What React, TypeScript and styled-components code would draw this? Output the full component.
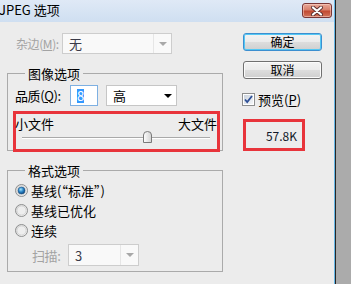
import React from "react";
import styled, { createGlobalStyle } from "styled-components";

const Global = createGlobalStyle`
  html, body { margin: 0; padding: 0; background: #ababab; }
  body {
    font-family: "Noto Sans CJK SC", "Microsoft YaHei", "DejaVu Sans", sans-serif;
    font-size: 13px;
    color: #000;
  }
  * { box-sizing: border-box; }
`;

const Screen = styled.div`
  width: 351px;
  height: 284px;
  display: flex;
  overflow: hidden;
  background: #ababab;
`;

const Window = styled.div`
  width: 335px;
  height: 284px;
  flex: none;
  display: flex;
  flex-direction: column;
  background: #ececec;
  border-right: 1px solid #66b6e6;
`;

const Edge = styled.div`
  flex: 1;
  border-left: 1px solid #262626;
  background: #ababab;
`;

const TitleBar = styled.div`
  height: 22px;
  flex: none;
  display: flex;
  align-items: flex-start;
  justify-content: space-between;
  padding: 0 2px 0 0;
  background: linear-gradient(#dfe9f6, #cfdff1);
`;

const TitleText = styled.div`
  line-height: 22px;
  font-size: 13px;
  margin-left: -1px;
  margin-top: -1px;
  color: #000;
`;

const CloseButton = styled.div`
  margin-top: 3px;
  width: 30px;
  height: 15px;
  border: 1px solid #7a3636;
  border-radius: 3px;
  background: linear-gradient(#e8a898 0%, #d8806c 45%, #c24a32 55%, #d0755c 100%);
  display: flex;
  align-items: center;
  justify-content: center;
  box-shadow: inset 0 0 0 1px rgba(255, 220, 210, 0.5);
`;

const Content = styled.div`
  flex: 1;
  display: flex;
  gap: 20px;
  padding: 11px 0 0 7px;
`;

const LeftCol = styled.div`
  width: 216px;
  flex: none;
  display: flex;
  flex-direction: column;
`;

const RightCol = styled.div`
  width: 79px;
  flex: none;
  display: flex;
  flex-direction: column;
`;

const MatteRow = styled.div`
  height: 21px;
  display: flex;
  align-items: center;
  padding-left: 9px;
`;

const Label = styled.div<{ $w: number; $disabled?: boolean; $size?: number }>`
  width: ${(p) => p.$w}px;
  flex: none;
  white-space: nowrap;
  letter-spacing: -0.4px;
  font-size: ${(p) => p.$size ?? 13}px;
  line-height: 15px;
  color: ${(p) => (p.$disabled ? "#a3a3a3" : "#000")};
`;

const Mn = styled.span`
  text-decoration: underline;
  text-underline-offset: 1px;
`;

const Combo = styled.div<{ $w: number; $h?: number; $disabled?: boolean }>`
  width: ${(p) => p.$w}px;
  height: ${(p) => p.$h ?? 21}px;
  flex: none;
  display: flex;
  border: 1px solid ${(p) => (p.$disabled ? "#cdcdcd" : "#c6c6c6")};
  background: ${(p) => (p.$disabled ? "#f9f9f9" : "#ffffff")};
`;

const ComboValue = styled.div<{ $disabled?: boolean }>`
  flex: 1;
  display: flex;
  align-items: center;
  padding-left: 6px;
  color: ${(p) => (p.$disabled ? "#3a3a48" : "#000")};
`;

const ComboArrow = styled.div<{ $disabled?: boolean }>`
  width: 18px;
  display: flex;
  align-items: center;
  justify-content: center;
  border-left: 1px solid ${(p) => (p.$disabled ? "#e6e6e6" : "transparent")};
  &::after {
    content: "";
    display: block;
    border-left: 4px solid transparent;
    border-right: 4px solid transparent;
    border-top: 4px solid ${(p) => (p.$disabled ? "#a8a8a8" : "#000")};
  }
`;

const Group = styled.fieldset<{ $bottom: number }>`
  margin: 12px 0 0;
  padding: 0 2px ${(p) => p.$bottom}px 5px;
  border: 1px solid #aaaaaa;
  min-width: 0;
`;

const Legend = styled.legend`
  padding: 0 3px;
  margin-left: 12px;
  line-height: 15px;
  font-size: 13px;
`;

const QualityRow = styled.div`
  margin-top: 4px;
  height: 21px;
  display: flex;
  align-items: center;
  padding-left: 2px;
`;

const NumberInput = styled.div`
  width: 28px;
  height: 21px;
  flex: none;
  border: 1px solid #7eb0e2;
  background: #fff;
  display: flex;
  align-items: center;
  padding-left: 6px;
  margin-right: 8px;
`;

const Selected = styled.span`
  background: #3399ff;
  color: #fff;
  line-height: 14px;
`;

const Highlight = styled.div`
  border: 3px solid #e8343b;
`;

const SizeBox = styled(Highlight)`
  margin-top: 5px;
  margin-bottom: -2px;
  height: 41px;
  display: flex;
  flex-direction: column;
`;

const SizeLabels = styled.div`
  display: flex;
  justify-content: space-between;
  line-height: 15px;
  padding-top: 2px;
  margin-left: -1px;
`;

const SliderArea = styled.div`
  position: relative;
  height: 13px;
  margin: 0 7px 0 6px;
  display: flex;
  align-items: center;
`;

const Track = styled.div`
  flex: 1;
  height: 2px;
  border-top: 1px solid #a9a9a9;
  border-bottom: 1px solid #ffffff;
`;

const Thumb = styled.svg`
  position: absolute;
  top: 0;
  width: 9px;
  height: 12px;
  margin-left: -4px;
`;

const RadioList = styled.div`
  padding-top: 2px;
  display: flex;
  flex-direction: column;
`;

const RadioRow = styled.div`
  height: 20px;
  display: flex;
  align-items: center;
  gap: 3px;
  padding-left: 2px;
  line-height: 15px;
`;

const ScanRow = styled.div`
  margin-top: 4px;
  display: flex;
  align-items: center;
  padding-left: 19px;
`;

const Button = styled.div<{ $default?: boolean }>`
  height: 18px;
  border-radius: 3px;
  border: 1px solid ${(p) => (p.$default ? "#3c8fd0" : "#707070")};
  background: linear-gradient(#f3f3f3 0%, #ebebeb 48%, #dddddd 52%, #cfcfcf 100%);
  box-shadow: inset 0 0 0 1px ${(p) => (p.$default ? "#54c8f4" : "#fbfbfb")};
  display: flex;
  align-items: center;
  justify-content: center;
  font-size: 12px;
  line-height: 14px;
  color: #000;
`;

const CancelButton = styled(Button)`
  margin-top: 10px;
`;

const CheckRow = styled.div`
  margin-top: 14px;
  height: 13px;
  display: flex;
  align-items: center;
  gap: 3px;
  margin-left: -1px;
  line-height: 15px;
`;

const SizeReadout = styled(Highlight)`
  margin-top: 13px;
  width: 62px;
  height: 32px;
  display: flex;
  align-items: center;
  justify-content: flex-end;
  padding-right: 5px;
  font-size: 12px;
  color: #101828;
`;

const Radio = ({ checked }: { checked?: boolean }) => (
  <svg width="13" height="13" viewBox="0 0 13 13">
    <defs>
      <linearGradient id="rb" x1="0" y1="0" x2="1" y2="1">
        <stop offset="0" stopColor="#d6d6d6" />
        <stop offset="1" stopColor="#f8f8f8" />
      </linearGradient>
      <radialGradient id="rd" cx="0.4" cy="0.35" r="0.7">
        <stop offset="0" stopColor="#a6e4fb" />
        <stop offset="0.5" stopColor="#2c86c8" />
        <stop offset="1" stopColor="#0a3f78" />
      </radialGradient>
    </defs>
    <circle cx="6.5" cy="6.5" r="6" fill="url(#rb)" stroke="#8e8f8f" strokeWidth="1" />
    <circle cx="6.5" cy="6.5" r="4.5" fill="#eeeeee" stroke="#c8c8c8" strokeWidth="0.6" />
    {checked && <circle cx="6.5" cy="6.5" r="3.5" fill="url(#rd)" stroke="#1d4f7e" strokeWidth="0.6" />}
  </svg>
);

const Checkbox = () => (
  <svg width="13" height="13" viewBox="0 0 13 13">
    <defs>
      <linearGradient id="cb" x1="0" y1="0" x2="1" y2="1">
        <stop offset="0" stopColor="#cbd3de" />
        <stop offset="1" stopColor="#f4f6f8" />
      </linearGradient>
    </defs>
    <rect x="0.5" y="0.5" width="12" height="12" fill="#fff" stroke="#8e8f8f" />
    <rect x="2" y="2" width="9" height="9" fill="url(#cb)" />
    <path d="M3 6.5 L5.2 9 L10 3" fill="none" stroke="#2d4f96" strokeWidth="1.8" />
  </svg>
);

const quality = 8;
const qualityMax = 12;

export default function App() {
  return (
    <>
      <Global />
      <Screen>
        <Window>
          <TitleBar>
            <TitleText>JPEG 选项</TitleText>
            <CloseButton>
              <svg width="14" height="10" viewBox="0 0 14 10">
                <path d="M3 1.5 L11 8.5 M11 1.5 L3 8.5" stroke="#5a3030" strokeWidth="4" strokeLinecap="round" />
                <path d="M3 1.5 L11 8.5 M11 1.5 L3 8.5" stroke="#ffffff" strokeWidth="2.2" strokeLinecap="round" />
              </svg>
            </CloseButton>
          </TitleBar>
          <Content>
            <LeftCol>
              <MatteRow>
                <Label $w={46} $size={12} $disabled>
                  杂边(<Mn>M</Mn>):
                </Label>
                <Combo $w={110} $disabled>
                  <ComboValue $disabled>无</ComboValue>
                  <ComboArrow $disabled />
                </Combo>
              </MatteRow>

              <Group $bottom={0}>
                <Legend>图像选项</Legend>
                <QualityRow>
                  <Label $w={55}>
                    品质(<Mn>Q</Mn>):
                  </Label>
                  <NumberInput>
                    <Selected>8</Selected>
                  </NumberInput>
                  <Combo $w={71}>
                    <ComboValue>高</ComboValue>
                    <ComboArrow />
                  </Combo>
                </QualityRow>
                <SizeBox>
                  <SizeLabels>
                    <span>小文件</span>
                    <span>大文件</span>
                  </SizeLabels>
                  <SliderArea>
                    <Track />
                    <Thumb viewBox="0 0 9 12" style={{ left: `${(quality / qualityMax) * 100}%` }}>
                      <defs>
                        <linearGradient id="th" x1="0" y1="0" x2="1" y2="0">
                          <stop offset="0" stopColor="#ffffff" />
                          <stop offset="1" stopColor="#d2d2d2" />
                        </linearGradient>
                      </defs>
                      <path
                        d="M0.5 11.5 V4 Q0.5 0.5 4.5 0.5 Q8.5 0.5 8.5 4 V11.5 Z"
                        fill="url(#th)"
                        stroke="#7a7a7a"
                      />
                    </Thumb>
                  </SliderArea>
                </SizeBox>
              </Group>

              <Group $bottom={5}>
                <Legend>格式选项</Legend>
                <RadioList>
                  <RadioRow>
                    <Radio checked />
                    <span>基线(“标准”)</span>
                  </RadioRow>
                  <RadioRow>
                    <Radio />
                    <span>基线已优化</span>
                  </RadioRow>
                  <RadioRow>
                    <Radio />
                    <span>连续</span>
                  </RadioRow>
                </RadioList>
                <ScanRow>
                  <Label $w={36} $disabled>
                    扫描:
                  </Label>
                  <Combo $w={71} $h={22} $disabled>
                    <ComboValue $disabled>3</ComboValue>
                    <ComboArrow $disabled />
                  </Combo>
                </ScanRow>
              </Group>
            </LeftCol>

            <RightCol>
              <Button $default>确定</Button>
              <CancelButton>取消</CancelButton>
              <CheckRow>
                <Checkbox />
                <span>
                  预览(<Mn>P</Mn>)
                </span>
              </CheckRow>
              <SizeReadout>57.8K</SizeReadout>
            </RightCol>
          </Content>
        </Window>
        <Edge />
      </Screen>
    </>
  );
}
